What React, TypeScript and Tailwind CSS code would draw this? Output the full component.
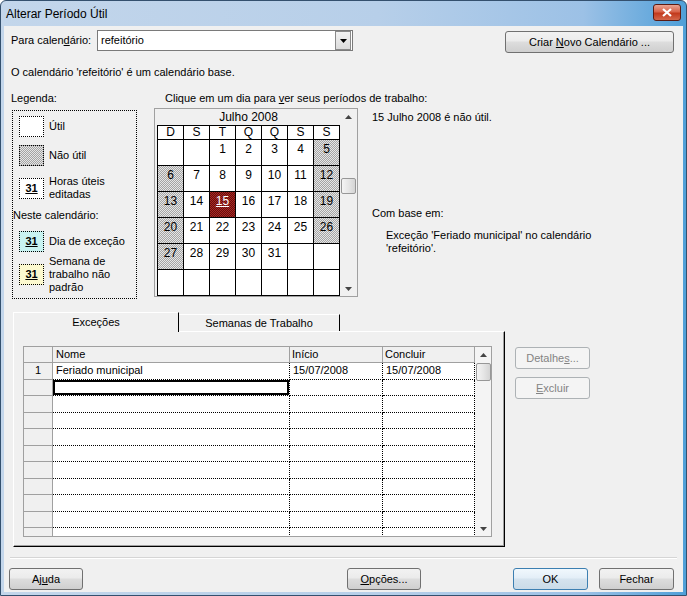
import React from "react";

const hatch =
  "bg-[#c4c4c4] bg-[image:repeating-conic-gradient(#a4a4a4_0_25%,#e6e6e6_0_50%)] bg-[length:2px_2px]";
const hatchRed =
  "bg-[#8b1a1a] bg-[image:repeating-conic-gradient(#6a0c0c_0_25%,#a52a24_0_50%)] bg-[length:2px_2px]";

const weeks: (number | null)[][] = [
  [null, null, 1, 2, 3, 4, 5],
  [6, 7, 8, 9, 10, 11, 12],
  [13, 14, 15, 16, 17, 18, 19],
  [20, 21, 22, 23, 24, 25, 26],
  [27, 28, 29, 30, 31, null, null],
  [null, null, null, null, null, null, null],
];

const Up = () => (
  <svg width="7" height="4" viewBox="0 0 7 4">
    <path d="M0 4 L3.5 0 L7 4Z" fill="#444" />
  </svg>
);

const Down = () => (
  <svg width="7" height="4" viewBox="0 0 7 4">
    <path d="M0 0 L7 0 L3.5 4Z" fill="#444" />
  </svg>
);

function Thumb({ className = "" }: { className?: string }) {
  return (
    <div
      className={`w-[15px] rounded-[2px] border border-[#979797] bg-[image:linear-gradient(90deg,#f4f4f4,#e6e6e6_50%,#d4d4d4)] ${className}`}
    />
  );
}

function Button({
  children,
  className = "",
  primary,
  disabled,
}: {
  children: React.ReactNode;
  className?: string;
  primary?: boolean;
  disabled?: boolean;
}) {
  const look = disabled
    ? "border-[#adb2b5] bg-[#f4f4f4] text-[#838383]"
    : primary
    ? "border-[#3c7fb1] bg-[image:linear-gradient(#f1f8fd,#e3eef7_45%,#d5e3ee_50%,#cadbe8)]"
    : "border-[#707070] bg-[image:linear-gradient(#f2f2f2,#ebebeb_45%,#dddddd_50%,#cfcfcf)]";
  return (
    <div
      className={`flex items-center justify-center h-[22px] rounded-[3px] border ${look} ${className}`}
    >
      {children}
    </div>
  );
}

function Swatch31({ bg }: { bg: string }) {
  return (
    <div
      className={`w-[25px] h-[21px] shrink-0 border border-dotted border-black flex items-center justify-center font-bold underline ${bg}`}
    >
      31
    </div>
  );
}

export default function App() {
  return (
    <div className="w-[687px] h-[596px] flex flex-col border border-[#34506e] rounded-t-[6px] bg-[image:linear-gradient(90deg,#c3d6eb,#b7cfe9_55%,#9cc1e6_85%,#4f9fd8)] text-[11px] text-black font-['Liberation_Sans',Arial,sans-serif]">
      {/* Title bar */}
      <div className="h-[25px] shrink-0 flex items-center pl-[5px] pr-[5px]">
        <span className="text-[12px]">Alterar Período Útil</span>
        <div className="ml-auto self-start mt-[3px] w-[28px] h-[17px] rounded-[3px] border border-[#5b1a12] bg-[image:linear-gradient(#e9a493,#d8644a_45%,#c2391c_55%,#d3664a)] flex items-center justify-center">
          <svg width="10" height="9" viewBox="0 0 10 9">
            <path d="M1 1 L9 8 M9 1 L1 8" stroke="#fff" strokeWidth="2.2" />
          </svg>
        </div>
      </div>

      <div className="mx-[3px] mb-[3px] flex-1 bg-[#f0f0f0] flex flex-col">
        {/* Para calendário */}
        <div className="flex items-start h-[23px] mt-[4px]">
          <span className="ml-[7px] w-[86px] leading-[21px]">
            Para calen<span className="underline">d</span>ário:
          </span>
          <div className="w-[256px] h-[21px] border border-[#7a7a7a] bg-white flex items-center">
            <span className="pl-[3px] flex-1">refeitório</span>
            <div className="w-[16px] h-[19px] mr-[1px] border border-[#8a8a8a] bg-[image:linear-gradient(#f2f2f2,#dcdcdc)] flex items-center justify-center">
              <svg width="7" height="4" viewBox="0 0 7 4">
                <path d="M0 0 L7 0 L3.5 4Z" fill="#000" />
              </svg>
            </div>
          </div>
          <Button className="ml-auto mr-[9px] mt-[1px] w-[169px]">
            <span>
              Criar <span className="underline">N</span>ovo Calendário ...
            </span>
          </Button>
        </div>

        <div className="ml-[7px] mt-[12px] leading-[14px]">
          O calendário 'refeitório' é um calendário base.
        </div>

        {/* Legend + calendar + info */}
        <div className="flex items-start mt-[12px]">
          <div className="ml-[7px] flex flex-col">
            <div className="leading-[14px]">Legenda:</div>
            <div className="ml-[1px] mt-[5px] w-[125px] h-[189px] border border-dotted border-black pl-[6px] flex flex-col">
              <div className="flex items-center mt-[5px]">
                <div className="w-[25px] h-[21px] border border-dotted border-black bg-white" />
                <span className="ml-[5px]">Útil</span>
              </div>
              <div className="flex items-center mt-[8px]">
                <div
                  className={`w-[25px] h-[21px] border border-dotted border-black ${hatch}`}
                />
                <span className="ml-[5px]">Não útil</span>
              </div>
              <div className="flex items-center mt-[9px]">
                <Swatch31 bg="bg-white" />
                <span className="ml-[5px] leading-[13px]">
                  Horas úteis
                  <br />
                  editadas
                </span>
              </div>
              <div className="mt-[7px] -ml-[6px] leading-[14px]">
                Neste calendário:
              </div>
              <div className="flex items-center mt-[9px]">
                <Swatch31 bg="bg-[#c9f3f1]" />
                <span className="ml-[5px]">Dia de exceção</span>
              </div>
              <div className="flex items-center mt-[3px]">
                <Swatch31 bg="bg-[#fcf9cf]" />
                <span className="ml-[5px] leading-[13px]">
                  Semana de
                  <br />
                  trabalho não
                  <br />
                  padrão
                </span>
              </div>
            </div>
          </div>

          <div className="ml-[17px] w-[204px] shrink-0 flex flex-col">
            <div className="pl-[11px] leading-[14px] whitespace-nowrap">
              Clique em um dia para <span className="underline">v</span>er seus
              períodos de trabalho:
            </div>
            <div className="mt-[3px] w-[204px] h-[189px] border border-[#a0a0a0] bg-[#f0f0f0] flex overflow-hidden">
              <div className="pl-[2px] flex flex-col">
                <div className="h-[16px] w-[183px] text-center text-[12px] leading-[16px]">
                  Julho 2008
                </div>
                <div className="grid grid-cols-[repeat(7,26px)] w-[183px] border-l border-t border-black text-[12px]">
                  {["D", "S", "T", "Q", "Q", "S", "S"].map((d, i) => (
                    <div
                      key={i}
                      className="h-[14px] leading-[13px] text-center border-r border-b border-black bg-white"
                    >
                      {d}
                    </div>
                  ))}
                  {weeks.map((w, r) =>
                    w.map((d, c) => {
                      const weekend = d !== null && (c === 0 || c === 6);
                      const sel = d === 15;
                      return (
                        <div
                          key={`${r}-${c}`}
                          className={`h-[26px] pt-[2px] leading-[14px] text-center border-r border-b border-black ${
                            sel
                              ? `${hatchRed} text-white underline`
                              : weekend
                              ? hatch
                              : "bg-white"
                          }`}
                        >
                          {d ?? ""}
                        </div>
                      );
                    })
                  )}
                </div>
              </div>
              <div className="ml-auto w-[17px] flex flex-col items-center">
                <div className="h-[16px] flex items-center justify-center">
                  <Up />
                </div>
                <Thumb className="h-[16px] mt-[53px]" />
                <div className="flex-1" />
                <div className="h-[14px] flex items-center justify-center">
                  <Down />
                </div>
              </div>
            </div>
          </div>

          <div className="ml-[14px] flex flex-col">
            <div className="mt-[19px] leading-[14px]">
              15 Julho 2008 é não útil.
            </div>
            <div className="mt-[82px] leading-[14px]">Com base em:</div>
            <div className="mt-[9px] pl-[14px] leading-[13px]">
              Exceção 'Feriado municipal' no calendário
              <br />
              'refeitório'.
            </div>
          </div>
        </div>

        {/* Tabs + panel + side buttons */}
        <div className="flex items-start ml-[9px] mt-[13px]">
          <div className="flex flex-col">
            <div className="flex h-[19px] items-start">
              <div className="relative z-10 w-[166px] h-[20px] bg-[#f0f0f0] border-t border-l border-white border-r-[#000] border-r flex items-center justify-center">
                Exceções
              </div>
              <div className="mt-[2px] w-[161px] h-[17px] border-t border-white border-r border-r-[#000] flex items-center justify-center">
                Semanas de Trabalho
              </div>
            </div>
            <div className="w-[492px] h-[216px] border-t border-l border-white border-r border-b border-r-black border-b-black shadow-[inset_-1px_-1px_0_#a0a0a0] pl-[9px] pt-[14px]">
              <div className="w-[469px] h-[191px] border border-[#a0a0a0] bg-white flex overflow-hidden">
                <div className="flex flex-col w-[451px]">
                  <div className="flex h-[16px] shrink-0 bg-[#f0f0f0] border-b border-[#a0a0a0] leading-[15px]">
                    <div className="w-[29px] border-r border-[#a0a0a0]" />
                    <div className="w-[237px] border-r border-[#a0a0a0] pl-[3px]">
                      Nome
                    </div>
                    <div className="w-[93px] border-r border-[#a0a0a0] pl-[2px]">
                      Início
                    </div>
                    <div className="w-[92px] border-r border-[#a0a0a0] pl-[2px]">
                      Concluir
                    </div>
                  </div>
                  {Array.from({ length: 11 }).map((_, i) => (
                    <div key={i} className="flex h-[16.5px] shrink-0 leading-[15px]">
                      <div className="w-[29px] bg-[#f0f0f0] border-r border-b border-[#a0a0a0] text-center">
                        {i === 0 ? "1" : ""}
                      </div>
                      <div className="w-[237px] border-r border-b border-dotted border-black">
                        {i === 0 ? (
                          <span className="pl-[3px]">Feriado municipal</span>
                        ) : i === 1 ? (
                          <div className="h-full border-2 border-black" />
                        ) : null}
                      </div>
                      <div className="w-[93px] border-r border-b border-dotted border-black pl-[3px]">
                        {i === 0 ? "15/07/2008" : ""}
                      </div>
                      <div className="w-[92px] border-r border-b border-dotted border-black pl-[3px]">
                        {i === 0 ? "15/07/2008" : ""}
                      </div>
                    </div>
                  ))}
                </div>
                <div className="w-[16px] bg-[#f4f4f4] flex flex-col items-center">
                  <div className="h-[16px] flex items-center justify-center">
                    <Up />
                  </div>
                  <Thumb className="h-[18px]" />
                  <div className="flex-1" />
                  <div className="h-[14px] flex items-center justify-center">
                    <Down />
                  </div>
                </div>
              </div>
            </div>
          </div>
          <div className="ml-[10px] mt-[35px] flex flex-col">
            <Button disabled className="w-[75px] h-[21px]">
              <span>
                Detalhe<span className="underline">s</span>...
              </span>
            </Button>
            <Button disabled className="w-[75px] h-[21px] mt-[8px]">
              <span>
                <span className="underline">E</span>xcluir
              </span>
            </Button>
          </div>
        </div>

        <div className="mx-[6px] mt-[10px] h-[2px] border-t border-[#d5d5d5] border-b border-b-white" />

        <div className="flex mt-[9px]">
          <Button className="ml-[5px] w-[74px]">
            <span>
              Aj<span className="underline">u</span>da
            </span>
          </Button>
          <Button className="ml-[264px] w-[74px]">
            <span>
              <span className="underline">O</span>pções...
            </span>
          </Button>
          <Button primary className="ml-[92px] w-[75px]">
            OK
          </Button>
          <Button className="ml-[11px] w-[75px]">Fechar</Button>
        </div>
      </div>
    </div>
  );
}
